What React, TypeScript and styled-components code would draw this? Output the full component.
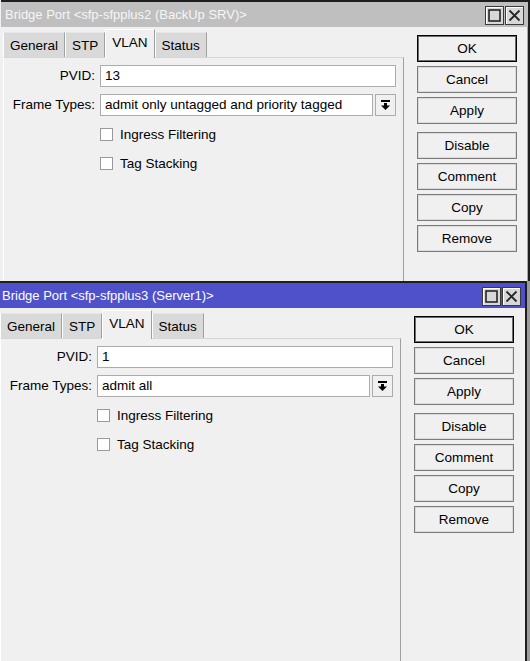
import React from 'react';
import styled, { createGlobalStyle } from 'styled-components';

const GlobalStyle = createGlobalStyle`
  html, body {
    margin: 0;
    padding: 0;
    background: #f0f0f0;
    overflow: hidden;
  }
  body {
    font-family: "Liberation Sans", Arial, sans-serif;
    font-size: 13.5px;
    color: #000;
  }
`;

const Desktop = styled.div`
  position: relative;
  width: 530px;
  height: 661px;
  overflow: hidden;
`;

const Frame = styled.div<{ $x: number; $y: number; $h: number; $front?: boolean }>`
  position: absolute;
  left: ${p => p.$x}px;
  top: ${p => p.$y}px;
  width: 527px;
  height: ${p => p.$h}px;
  border: 2px solid #1e1e1e;
  border-left: none;
  background: #f0f0f0;
  display: flex;
  flex-direction: column;
  box-shadow: ${p => (p.$front ? '4px 0 0 #9b9b9b' : 'inset -1px 0 0 #a8a8a8')};
`;

const TitleBar = styled.div<{ $active?: boolean }>`
  height: 25px;
  flex: none;
  display: flex;
  align-items: flex-start;
  background: ${p => (p.$active ? '#4e51c9' : '#bfbfbf')};
  color: ${p => (p.$active ? '#ffffff' : '#f6f6f6')};
`;

const TitleText = styled.div`
  flex: 1;
  padding-left: 4px;
  line-height: 25px;
  font-size: 13px;
  white-space: nowrap;
`;

const CaptionButtons = styled.div`
  display: flex;
  gap: 1px;
  margin: 4px 4px 0 0;
`;

const CaptionButton = styled.div`
  width: 17px;
  height: 17px;
  border: 1px solid #3a3a3a;
  background: #d8d8d8;
  box-shadow: inset 1px 1px 0 #ffffff;
  display: flex;
  align-items: center;
  justify-content: center;
`;

const Body = styled.div`
  flex: 1;
  display: flex;
  min-height: 0;
`;

const LeftPane = styled.div`
  width: 403px;
  padding-left: 2px;
  box-sizing: border-box;
  display: flex;
  flex-direction: column;
`;

const TabStrip = styled.div`
  height: 30px;
  flex: none;
  display: flex;
  align-items: flex-end;
  position: relative;
  z-index: 1;
`;

const Tab = styled.div<{ $active?: boolean }>`
  height: ${p => (p.$active ? '29px' : '25px')};
  margin-bottom: ${p => (p.$active ? '-1px' : '0')};
  padding: 0 6px ${p => (p.$active ? '4px' : '0')};
  box-sizing: border-box;
  display: flex;
  align-items: center;
  background: ${p => (p.$active ? '#f0f0f0' : '#d9d9d9')};
  border-top: 1px solid ${p => (p.$active ? '#ffffff' : '#e6e6e6')};
  border-left: 1px solid #ffffff;
  border-right: 1px solid #a0a0a0;
  white-space: nowrap;
`;

const Panel = styled.div`
  flex: 1;
  border-top: 1px solid #d6d6d6;
  border-left: 1px solid #ffffff;
  border-right: 1px solid #a0a0a0;
  padding: 7px 7px 0 0;
`;

const Form = styled.div`
  display: grid;
  grid-template-columns: 91px 1fr;
  grid-auto-rows: 22px;
  column-gap: 5px;
  row-gap: 7px;
`;

const Label = styled.div`
  text-align: right;
  line-height: 22px;
  white-space: nowrap;
`;

const Input = styled.div`
  height: 22px;
  box-sizing: border-box;
  border: 1px solid #acacac;
  background: #ffffff;
  padding: 0 4px;
  line-height: 20px;
  white-space: nowrap;
  overflow: hidden;
`;

const SelectRow = styled.div`
  display: flex;
  gap: 2px;
  & > ${Input} {
    flex: 1;
  }
`;

const DropButton = styled.div`
  width: 21px;
  height: 22px;
  box-sizing: border-box;
  border: 1px solid #acacac;
  background: #f0f0f0;
  display: flex;
  align-items: center;
  justify-content: center;
`;

const CheckRow = styled.label`
  grid-column: 2;
  display: flex;
  align-items: center;
  gap: 7px;
`;

const Box = styled.span`
  width: 13px;
  height: 13px;
  box-sizing: border-box;
  border: 1px solid #9a9a9a;
  background: #ffffff;
`;

const RightPane = styled.div`
  flex: 1;
  display: flex;
  flex-direction: column;
  padding: 8px 0 0 13px;
`;

const Button = styled.div<{ $default?: boolean; $spaced?: boolean }>`
  width: 100px;
  height: 27px;
  box-sizing: border-box;
  margin-bottom: 4px;
  margin-top: ${p => (p.$spaced ? '4px' : '0')};
  border: 1px solid ${p => (p.$default ? '#000000' : '#7c7c7c')};
  box-shadow: inset 0 0 0 1px ${p => (p.$default ? '#6c6c6c' : '#dadada')};
  background: #f0f0f0;
  display: flex;
  align-items: center;
  justify-content: center;
`;

const MaxIcon = () => (
  <svg width="13" height="13" viewBox="0 0 13 13">
    <rect x="1" y="1" width="11" height="11" fill="none" stroke="#262626" strokeWidth="1.6" />
  </svg>
);

const CloseIcon = () => (
  <svg width="13" height="13" viewBox="0 0 13 13">
    <path d="M1.5 1.5 L11.5 11.5 M11.5 1.5 L1.5 11.5" stroke="#262626" strokeWidth="1.8" />
  </svg>
);

const DropIcon = () => (
  <svg width="9" height="10" viewBox="0 0 9 10">
    <rect x="0" y="0" width="9" height="2" fill="#000" />
    <rect x="3" y="3" width="3" height="3" fill="#000" />
    <path d="M0 5.5 H9 L4.5 10 Z" fill="#000" />
  </svg>
);

type WindowProps = {
  x: number;
  y: number;
  h: number;
  active?: boolean;
  title: string;
  pvid: string;
  frameTypes: string;
};

const BridgePortWindow = ({ x, y, h, active, title, pvid, frameTypes }: WindowProps) => (
  <Frame $x={x} $y={y} $h={h} $front={active}>
    <TitleBar $active={active}>
      <TitleText>{title}</TitleText>
      <CaptionButtons>
        <CaptionButton>
          <MaxIcon />
        </CaptionButton>
        <CaptionButton>
          <CloseIcon />
        </CaptionButton>
      </CaptionButtons>
    </TitleBar>
    <Body>
      <LeftPane>
        <TabStrip>
          <Tab>General</Tab>
          <Tab>STP</Tab>
          <Tab $active>VLAN</Tab>
          <Tab>Status</Tab>
        </TabStrip>
        <Panel>
          <Form>
            <Label>PVID:</Label>
            <Input>{pvid}</Input>
            <Label>Frame Types:</Label>
            <SelectRow>
              <Input>{frameTypes}</Input>
              <DropButton>
                <DropIcon />
              </DropButton>
            </SelectRow>
            <CheckRow>
              <Box />
              Ingress Filtering
            </CheckRow>
            <CheckRow>
              <Box />
              Tag Stacking
            </CheckRow>
          </Form>
        </Panel>
      </LeftPane>
      <RightPane>
        <Button $default>OK</Button>
        <Button>Cancel</Button>
        <Button>Apply</Button>
        <Button $spaced>Disable</Button>
        <Button>Comment</Button>
        <Button>Copy</Button>
        <Button>Remove</Button>
      </RightPane>
    </Body>
  </Frame>
);

export default function App() {
  return (
    <>
      <GlobalStyle />
      <Desktop>
        <BridgePortWindow
          x={1}
          y={0}
          h={700}
          title="Bridge Port <sfp-sfpplus2 (BackUp SRV)>"
          pvid="13"
          frameTypes="admit only untagged and priority tagged"
        />
        <BridgePortWindow
          x={-2}
          y={281}
          h={420}
          active
          title="Bridge Port <sfp-sfpplus3 (Server1)>"
          pvid="1"
          frameTypes="admit all"
        />
      </Desktop>
    </>
  );
}
